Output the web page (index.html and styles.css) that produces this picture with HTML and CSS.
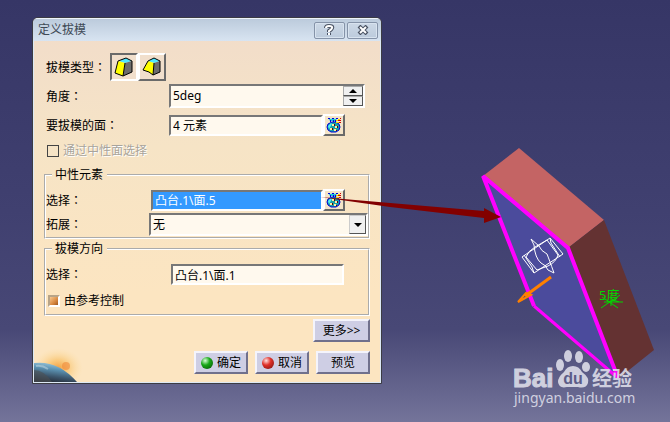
FILE: index.html
```html
<!DOCTYPE html>
<html lang="zh-CN">
<head>
    <meta charset="UTF-8">
    <meta name="viewport" content="width=device-width, initial-scale=1.0">
    <title>定义拔模</title>
    <link rel="stylesheet" href="styles.css">
</head>
<body>

<!-- shared icons -->
<svg class="sprites" width="0" height="0">
    <symbol id="bag" viewBox="0 0 16 16">
        <path d="M5 5 H9 L12 7 L13 10 L12 13 L9 15 H4 L1 13 L0 10 L1 7 Z" transform="translate(1 0)" fill="#18a0a8" stroke="#0000d8"/>
        <path d="M2 9 L5 6 L6 7 L3 12 Z" fill="#50f0f8"/>
        <path d="M2 1 L5 2 L7 1 L9 2 L11 1 L10 4 H4 Z" fill="#20c8d8"/>
        <path d="M2 1h2v1h-2z M6 1h2v1h-2z M10 1h2v1h-2z M4 3h1v2h-1z M7 3h1v2h-1z M9 3h1v2h-1z" fill="#0000d8"/>
        <path d="M10 3h2v1h-2z M12 2h2v1h-2z M10 5h4v1h-4z" fill="#f8d800"/>
        <path d="M12 3h3v1h-3z M14 1h1v1h-1z M13 5h2v1h-2z" fill="#d80000"/>
        <path d="M6 7h2v2h-2z M9 9h2v2h-2z M4 11h2v2h-2z M8 12h2v2h-2z" fill="#fff0a0"/>
        <path d="M8 7h1v2h-1z M11 9h1v2h-1z M6 11h1v2h-1z M10 13h1v1h-1z" fill="#600000"/>
    </symbol>
</svg>

<main class="dialog">
    <header class="titlebar">
        <h1>定义拔模</h1>
        <button class="title-btn" aria-label="帮助">
            <svg width="11" height="12" viewBox="0 0 11 12">
                <path d="M2 4 Q2 2 5 2 Q9 2 8 4 Q8 5 5 7 V8 M5 9 V11" fill="none" stroke="#4a5363" stroke-width="4"/>
                <path d="M2 4 Q2 2 5 2 Q9 2 8 4 Q8 5 5 7 V8 M5 9 V11" fill="none" stroke="#fff" stroke-width="2"/>
            </svg>
        </button>
        <button class="title-btn" aria-label="关闭">
            <svg width="12" height="10" viewBox="0 0 12 10">
                <path d="M2 1 L10 9 M10 1 L2 9" stroke="#4a5363" stroke-width="4"/>
                <path d="M3 2 L9 8 M9 2 L3 8" stroke="#fff" stroke-width="2"/>
            </svg>
        </button>
    </header>

    <form class="content">
        <div class="row row-type">
            <span class="label">拔模类型<span class="colon" lang="zh-TW">：</span></span>
            <button type="button" class="tool pressed" aria-label="恒定角度拔模">
                <svg width="20" height="21" viewBox="-1 -1 20 21">
                    <path d="M4 3 L11 0 L17 3 L10 5 Z" fill="#50e8ff"/>
                    <path d="M10 5 L17 3 V14 L8 18 Z" fill="#6c6c6c"/>
                    <path d="M3 3 L10 5 L8 18 L0 15 Z" fill="#ffff00"/>
                    <path d="M3 3 L11 0 L17 3 V14 L8 18 L0 15 Z M10 5 L8 18" fill="none" stroke="#000"/>
                </svg>
            </button>
            <button type="button" class="tool" aria-label="可变角度拔模">
                <svg width="20" height="21" viewBox="-1 -1 20 21">
                    <path d="M5 3 L11 0 L17 3 L11 5 Z" fill="#50e8ff"/>
                    <path d="M11 5 L17 3 V14 L10 17 Z" fill="#6c6c6c"/>
                    <path d="M5 3 L11 5 L10 17 L6 14 L0 12 Z" fill="#ffff00"/>
                    <path d="M5 3 L11 0 L17 3 V14 L10 17 L6 14 L0 12 Z M11 5 L10 17" fill="none" stroke="#000"/>
                </svg>
            </button>
        </div>

        <div class="row row-angle">
            <label class="label" for="angle">角度<span class="colon" lang="zh-TW">：</span></label>
            <div class="spinner">
                <input type="text" id="angle" value="5deg">
                <div class="spin-btns">
                    <button type="button" aria-label="增加"><svg width="8" height="4"><path d="M0 4 L4 0 L8 4 Z"/></svg></button>
                    <button type="button" aria-label="减少"><svg width="8" height="4"><path d="M0 0 L4 4 L8 0 Z"/></svg></button>
                </div>
            </div>
        </div>

        <div class="row row-faces">
            <label class="label" for="faces">要拔模的面<span class="colon" lang="zh-TW">：</span></label>
            <input class="field" type="text" id="faces" value="4 元素">
            <button type="button" class="bag-btn" aria-label="元素列表"><svg width="16" height="16"><use href="#bag"/></svg></button>
        </div>

        <div class="check disabled">
            <input type="checkbox" id="by-neutral" disabled>
            <label for="by-neutral">通过中性面选择</label>
        </div>

        <fieldset class="neutral">
            <legend>中性元素</legend>
            <div class="row">
                <label class="label" for="neutral">选择<span class="colon" lang="zh-TW">：</span></label>
                <input class="field active" type="text" id="neutral" value="凸台.1\面.5">
                <button type="button" class="bag-btn" aria-label="元素列表"><svg width="16" height="16"><use href="#bag"/></svg></button>
            </div>
            <div class="row row-combo">
                <label class="label" for="propagation">拓展<span class="colon" lang="zh-TW">：</span></label>
                <div class="combo">
                    <select id="propagation">
                        <option>无</option>
                    </select>
                    <span class="combo-arrow"><svg width="8" height="4"><path d="M0 0 L4 4 L8 0 Z"/></svg></span>
                </div>
            </div>
        </fieldset>

        <fieldset class="direction">
            <legend>拔模方向</legend>
            <div class="row">
                <label class="label" for="direction">选择<span class="colon" lang="zh-TW">：</span></label>
                <input class="field" type="text" id="direction" value="凸台.1\面.1">
            </div>
            <div class="check">
                <input type="checkbox" id="by-reference" checked>
                <label for="by-reference">由参考控制</label>
            </div>
        </fieldset>

        <div class="more">
            <button type="button" class="btn">更多&gt;&gt;</button>
        </div>
        <div class="actions">
            <button type="button" class="btn"><span class="orb green"></span>确定</button>
            <button type="button" class="btn"><span class="orb red"></span>取消</button>
            <button type="button" class="btn">预览</button>
        </div>
    </form>

    <svg class="planet" width="50" height="36" viewBox="0 0 50 36">
        <defs>
            <radialGradient id="glow">
                <stop offset="0" stop-color="#f4a040"/>
                <stop offset="0.4" stop-color="#f8c470" stop-opacity="0.8"/>
                <stop offset="1" stop-color="#fce0a8" stop-opacity="0"/>
            </radialGradient>
            <linearGradient id="earth" x1="0.6" y1="0" x2="0.3" y2="1">
                <stop offset="0" stop-color="#a8d0e0"/>
                <stop offset="0.35" stop-color="#5c94b4"/>
                <stop offset="0.7" stop-color="#3c566c"/>
                <stop offset="1" stop-color="#262c38"/>
            </linearGradient>
        </defs>
        <ellipse cx="24" cy="22" rx="25" ry="20" fill="url(#glow)"/>
        <circle cx="32" cy="20" r="4" fill="#f08838" opacity="0.6"/>
        <path d="M0 17 Q24 14 43 36 H0 Z" fill="url(#earth)"/>
        <path d="M0 24 Q10 24 18 36 H0 Z" fill="#4c5054" opacity="0.6"/>
        <path d="M2 20 Q8 19 14 23" fill="none" stroke="#c8dce4" stroke-width="2" opacity="0.5"/>
    </svg>
</main>

<!-- 3D view: the padded block, its compass and the callout arrow -->
<svg class="viewport" width="670" height="422" viewBox="0 0 670 422">
    <polygon points="483,176 519,148 604,220 568,248" fill="#c46464"/>
    <polygon points="568,248 604,220 654,350 619,378" fill="#643232"/>
    <polygon points="483,176 568,248 619,378 534,306" fill="#4b4b9c"/>
    <path d="M534 306 L483 176 L568 248 L618 378" fill="none" stroke="#ff00ff" stroke-width="4"/>
    <path d="M534 306 L618 378" stroke="#ff00ff" stroke-width="3"/>

    <g fill="none" stroke="#fff" stroke-width="1">
        <path d="M522 257 L550 238 L563 254 L534 273 Z"/>
        <path d="M526 257 Q528 251 535 247 L547 240 L558 255 Q556 262 548 266 L537 270 Z"/>
        <path d="M531 239 L534 245 Q535 258 541 263 Q546 265 548 270 L554 273 Q549 259 547 254 Q541 251 539 246 Z"/>
        <path d="M550 238 L551 243 L560 257 M534 273 L532 267 L524 255"/>
    </g>

    <g fill="none" stroke="#ff8000">
        <path d="M551 277 L525 296" stroke-width="3"/>
        <path d="M518 302 L526 293 L531 295 Z" stroke-width="2"/>
    </g>

    <text class="dimension" x="599" y="300">5度</text>
    <path d="M601 308 L620 295 M602 297 L618 308 M611 295 V306 M604 302 H623" stroke="#00d800" stroke-width="1"/>

    <polygon points="320,197 484,211 484,208 501,217 484,223 484,218 390,207" fill="#820000"/>

    <g class="watermark">
        <text class="wm-bai" x="513" y="387">Bai</text>
        <ellipse cx="560" cy="365" rx="4" ry="6"/>
        <ellipse cx="568" cy="356" rx="4" ry="6"/>
        <ellipse cx="579" cy="357" rx="4" ry="6"/>
        <ellipse cx="586" cy="367" rx="4" ry="5"/>
        <path d="M573 366 Q579 366 582 372 Q590 378 588 383 Q586 389 578 387 H567 Q559 389 558 382 Q558 377 564 372 Q567 366 573 366 Z"/>
        <text class="wm-du" x="573" y="384">du</text>
        <text class="wm-jingyan" x="592" y="386">经验</text>
        <text class="wm-url" x="514" y="403">jingyan.baidu.com</text>
    </g>
</svg>

</body>
</html>
```
FILE: styles.css
```css
* {
    box-sizing: border-box;
}
body {
    margin: 0;
    padding: 17px 32px;
    min-height: 100vh;
    font: 12px/16px "Noto Sans", "Noto Sans CJK SC", sans-serif;
    color: #000;
    background: linear-gradient(#363666, #404070 50%, #484876 78%, #74749a);
}
button, input, select {
    font: inherit;
    color: inherit;
    margin: 0;
    padding: 0;
    border-radius: 0;
}
button {
    display: flex;
    align-items: center;
    justify-content: center;
}
svg {
    display: block;
    flex-shrink: 0;
}
.sprites {
    position: absolute;
}

/* dialog window */
.dialog {
    position: relative;
    width: 350px;
    max-width: 100%;
    border: 1px solid #3c3c44;
    border-radius: 6px 6px 0 0;
    background: linear-gradient(#f1dcca, #f6e4c6 35%, #fce5c1 75%);
    box-shadow: inset 0 0 0 1px #dce8f4;
    overflow: hidden;
}
.titlebar {
    display: flex;
    align-items: center;
    gap: 2px;
    height: 23px;
    padding: 0 3px 0 5px;
    background: linear-gradient(#bccbdc, #d8e4f1);
    border-top: 1px solid #eef4fa;
}
.titlebar h1 {
    flex: 1;
    margin: 0;
    font-size: 12px;
    font-weight: normal;
    color: #3f4a56;
}
.title-btn {
    width: 31px;
    height: 17px;
    background: linear-gradient(#ccd8e6, #bccbdc);
    border: 1px solid #8593a8;
    border-radius: 2px;
    box-shadow: inset 0 0 0 1px #d8e3ef;
}
.content {
    padding: 12px 11px 9px;
}

/* rows */
.row {
    display: flex;
    align-items: center;
    padding-left: 2px;
}
.label {
    width: 123px;
}
.colon {
    font-family: "Noto Sans CJK TC", sans-serif;
}
.row-type .label {
    width: 64px;
}
.row-angle {
    margin-top: 3px;
}
.row-faces {
    margin-top: 6px;
}
.tool {
    width: 28px;
    height: 28px;
    background: #f1dfcc;
    border: 2px solid;
    border-color: #fff #6a6a6a #6a6a6a #fff;
}
.tool.pressed {
    border-color: #6a6a6a #fff #fff #6a6a6a;
}
.field, .spinner, .combo {
    background: #fff9ee;
    border: 2px solid;
    border-color: #777 #fff #fff #777;
}
.field {
    width: 154px;
    height: 21px;
    padding-left: 2px;
}
.spinner {
    display: flex;
    width: 196px;
    height: 24px;
}
.spinner input {
    flex: 1;
    min-width: 0;
    padding-left: 2px;
    border: none;
    background: none;
}
.spin-btns {
    display: flex;
    flex-direction: column;
    width: 20px;
}
.spin-btns button {
    flex: 1;
    min-height: 0;
    background: #f0f0f0;
    border: 1px solid;
    border-color: #aaa #555 #555 #aaa;
}
.bag-btn {
    width: 22px;
    height: 22px;
    background: #f4e4c8;
    border: 2px solid;
    border-color: #fff #6a6a6a #6a6a6a #fff;
}

/* check boxes */
.check {
    display: flex;
    align-items: center;
    gap: 4px;
    padding-left: 3px;
    height: 16px;
}
.check input {
    appearance: none;
    width: 12px;
    height: 12px;
    border: 1px solid #444;
}
.check.disabled {
    margin-top: 7px;
}
.check.disabled label {
    color: #a8a49c;
    text-shadow: 1px 1px #fff;
}
.check input:checked {
    border: 2px solid;
    border-color: #b8a488 #fff #fff #b8a488;
    background: linear-gradient(135deg, #f8c890, #d88840 60%, #a05820);
}

/* groups */
fieldset {
    margin: 0;
    padding: 0;
    min-width: 0;
    border: 2px groove #fff;
}
legend {
    margin-left: 6px;
    padding: 0 4px 0 3px;
}
fieldset .row {
    padding-left: 0;
}
.neutral {
    margin-top: 8px;
    padding: 6px 0 1px;
}
.neutral .label {
    width: 105px;
}
.neutral .field {
    width: 172px;
}
.field.active {
    color: #fff;
    background: #3399ff;
}
.neutral .row-combo {
    margin-top: 2px;
}
.neutral .row-combo .label {
    width: 103px;
}
.combo {
    display: flex;
    flex: 1;
    height: 23px;
}
.combo select {
    flex: 1;
    appearance: none;
    padding-left: 2px;
    border: none;
    background: none;
}
.combo-arrow {
    display: flex;
    align-items: center;
    justify-content: center;
    width: 17px;
    background: #f0f0f0;
    border: 1px solid;
    border-color: #ccc #555 #555 #ccc;
}
.direction {
    margin-top: 2px;
    padding: 7px 0 5px;
}
.direction .label {
    width: 125px;
}
.direction .field {
    width: 173px;
}
.direction .check {
    margin-top: 8px;
    padding-left: 2px;
}

/* buttons */
.more, .actions {
    display: flex;
    justify-content: flex-end;
    gap: 7px;
}
.more {
    margin-top: 3px;
}
.actions {
    margin-top: 9px;
}
.btn {
    gap: 4px;
    width: 54px;
    height: 23px;
    background: #cecee4;
    border: 2px solid;
    border-color: #f4f4fc #70708c #70708c #f4f4fc;
}
.more .btn {
    width: 57px;
}
.orb {
    width: 12px;
    height: 12px;
    border-radius: 50%;
}
.orb.green {
    background: radial-gradient(circle at 35% 30%, #d8ffd8, #18a818 40%, #044c04);
}
.orb.red {
    background: radial-gradient(circle at 35% 30%, #ffe0e0, #e03028 40%, #701010);
}
.planet {
    position: absolute;
    left: 1px;
    bottom: 1px;
}

/* 3D view */
.viewport {
    position: absolute;
    left: 0;
    top: 0;
    pointer-events: none;
}
.dimension {
    font-size: 13px;
    fill: #00d800;
}
.watermark {
    fill: #dcdce8;
    opacity: 0.9;
}
.wm-bai {
    font: bold 26px "Liberation Sans", sans-serif;
    stroke: #dcdce8;
    stroke-width: 1px;
}
.wm-du {
    font: bold 16px "Liberation Sans", sans-serif;
    text-anchor: middle;
    fill: #5c5c88;
}
.wm-jingyan {
    font: bold 20px "Noto Sans CJK SC", sans-serif;
}
.wm-url {
    font-size: 14px;
}
```
